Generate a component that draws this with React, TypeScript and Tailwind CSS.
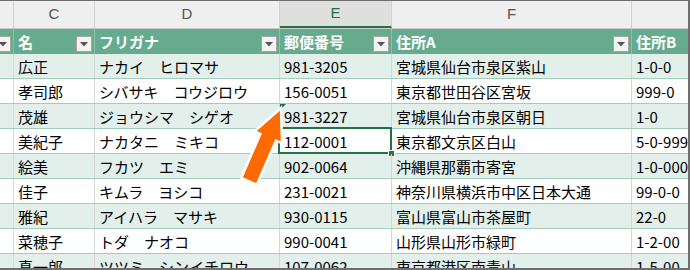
import React from "react";

const widths = ["w-[14px]", "w-[81px]", "w-[185px]", "w-[112px]", "w-[240px]", "w-[100px]"];

const rows: string[][] = [
  ["広正", "ナカイ　ヒロマサ", "981-3205", "宮城県仙台市泉区紫山", "1-0-0"],
  ["孝司郎", "シバサキ　コウジロウ", "156-0051", "東京都世田谷区宮坂", "999-0"],
  ["茂雄", "ジョウシマ　シゲオ", "981-3227", "宮城県仙台市泉区朝日", "1-0"],
  ["美紀子", "ナカタニ　ミキコ", "112-0001", "東京都文京区白山", "5-0-999"],
  ["絵美", "フカツ　エミ", "902-0064", "沖縄県那覇市寄宮", "1-0-000"],
  ["佳子", "キムラ　ヨシコ", "231-0021", "神奈川県横浜市中区日本大通", "99-0-0"],
  ["雅紀", "アイハラ　マサキ", "930-0115", "富山県富山市茶屋町", "22-0"],
  ["菜穂子", "トダ　ナオコ", "990-0041", "山形県山形市緑町", "1-2-00"],
  ["真一郎", "ツツミ　シンイチロウ", "107-0062", "東京都港区南青山", "1-5-00"],
];

function Drop() {
  return (
    <div className="absolute right-[2px] bottom-[2px] w-[16px] h-[16px] bg-[#f3f3f3] border border-[#a6a6a6] flex items-center justify-center">
      <svg width="8" height="5" viewBox="0 0 8 5">
        <polygon points="0,0 8,0 4,4.5" fill="#555" />
      </svg>
    </div>
  );
}

export default function App() {
  const font = { fontFamily: '"Noto Sans CJK JP", "Noto Sans", sans-serif' };
  return (
    <div
      className="relative w-[690px] h-[270px] overflow-hidden bg-white border-t border-r-2 border-b-2 border-[#6e6e6e]"
      style={font}
    >
      <div className="w-[740px]">
        {/* column letters */}
        <div className="flex h-[28px] bg-[#efefef] border-b border-[#c8c8c8] text-[15px] text-[#555]" style={{ fontFamily: '"Liberation Sans", Arial, sans-serif' }}>
          {["", "C", "D", "E", "F", ""].map((l, i) => (
            <div
              key={i}
              className={`${widths[i]} shrink-0 flex items-center justify-center border-r border-[#d2d2d2] ${
                l === "E" ? "bg-[#dfdfdf] text-[#217346] border-b-2 border-b-[#217346]" : ""
              }`}
            >
              {l}
            </div>
          ))}
        </div>
        {/* table header */}
        <div className="flex h-[25px] bg-[#67ab8e] text-white font-bold text-[15px]">
          {["", "名", "フリガナ", "郵便番号", "住所A", "住所B"].map((h, i) => (
            <div
              key={i}
              className={`${widths[i]} shrink-0 relative flex items-center pl-[4px] border-r border-[#8fc0aa] leading-none`}
            >
              {h}
              {i < 5 && <Drop />}
            </div>
          ))}
        </div>
        {rows.map((r, ri) => (
          <div
            key={ri}
            className={`flex h-[25px] border-b border-[#a2cdb9] text-[15px] text-black ${
              ri % 2 === 0 ? "bg-[#e2efea]" : "bg-white"
            }`}
          >
            {["", ...r].map((c, ci) => (
              <div
                key={ci}
                className={`${widths[ci]} shrink-0 relative flex items-center pl-[4px] border-r border-[#d6d6d6] whitespace-pre leading-none`}
              >
                {c}
                {ri === 2 && ci === 3 && (
                  <svg className="absolute left-0 top-0" width="6" height="6" viewBox="0 0 6 6">
                    <polygon points="0,0 6,0 0,6" fill="#217346" />
                  </svg>
                )}
                {ri === 3 && ci === 3 && (
                  <>
                    <div className="absolute left-[-2px] top-[-2px] right-[-1px] bottom-[-1px] border-2 border-[#217346]" />
                    <div className="absolute right-[-4px] bottom-[-4px] w-[7px] h-[7px] bg-[#217346] border border-white" />
                  </>
                )}
              </div>
            ))}
          </div>
        ))}
      </div>
      <svg className="absolute left-0 top-0 pointer-events-none" width="690" height="270" viewBox="0 0 690 270">
        <polygon
          points="281,107 282,142.3 276,139.7 256.8,183.7 241.2,176.9 260.4,132.9 254.5,130.3"
          fill="#ff6a00"
          stroke="white"
          strokeWidth="2.5"
          strokeLinejoin="miter"
        />
      </svg>
    </div>
  );
}
